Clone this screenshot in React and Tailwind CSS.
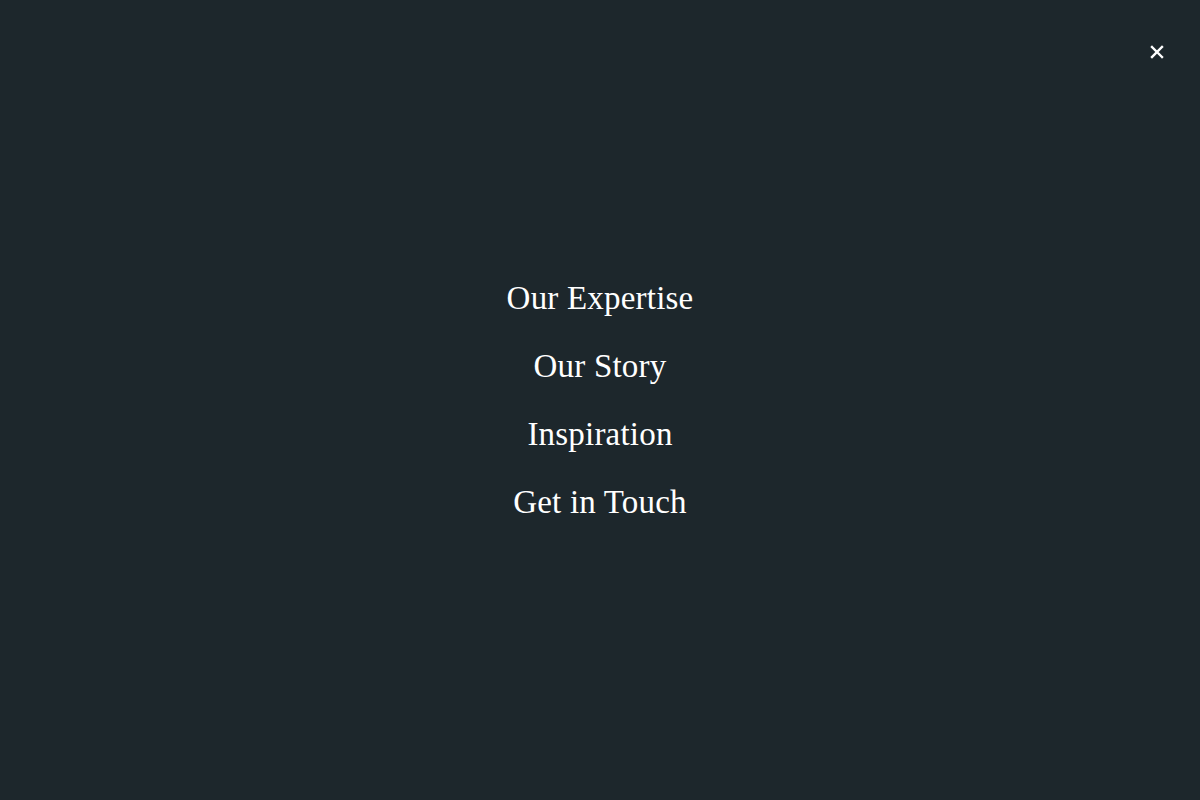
import React from 'react';

const links = ['Our Expertise', 'Our Story', 'Inspiration', 'Get in Touch'];

const App = () => {
  return (
    <div className="min-h-screen w-full bg-[#1d272c] flex flex-col" style={{ fontFamily: '"Liberation Serif", "DejaVu Serif", serif' }}>
      {/* Close */}
      <div className="flex justify-end pt-[40px] pr-[31px]">
        <button className="w-[24px] h-[24px] flex items-center justify-center text-white">
          <svg width="14" height="14" viewBox="0 0 14 14" fill="none" stroke="currentColor" strokeWidth="2.4" strokeLinecap="square">
            <path d="M2 2 L12 12 M12 2 L2 12" />
          </svg>
        </button>
      </div>

      {/* Menu */}
      <nav className="flex flex-col items-center pt-[214px] gap-[28px]">
        {links.map((l) => (
          <a key={l} href="#" className="text-white text-[33px] leading-[40px] tracking-[0.2px]">
            {l}
          </a>
        ))}
      </nav>
    </div>
  );
};

export default App;
